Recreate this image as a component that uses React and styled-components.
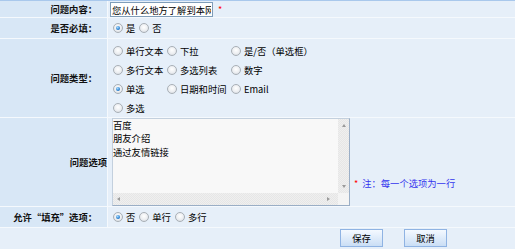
import React from 'react';
import styled, { createGlobalStyle, css } from 'styled-components';

const GlobalStyle = createGlobalStyle`
  html, body {
    margin: 0;
    padding: 0;
    background: #e6eff9;
  }
  body {
    font-family: "Noto Sans CJK SC", "Noto Sans", sans-serif;
    font-size: 9.3px;
    color: #000;
  }
`;

const Form = styled.div`
  width: 515px;
  height: 249px;
  box-sizing: border-box;
  border-top: 1px solid #a9c8ec;
  background: #f5f9fd;
  display: flex;
  flex-direction: column;
  gap: 1px;
  overflow: hidden;
`;

const Row = styled.div`
  display: grid;
  grid-template-columns: 107px 1fr;
  column-gap: 1px;
  height: ${(p) => p.$h}px;
  flex: ${(p) => (p.$h ? 'none' : '1')};
`;

const Label = styled.div`
  background: #d8e7f6;
  display: flex;
  align-items: center;
  justify-content: flex-end;
  padding-right: ${(p) => (p.$flush ? '0' : '10px')};
  font-weight: bold;
  color: #111;
  white-space: nowrap;
`;

const Cell = styled.div`
  background: #e6eff9;
  display: flex;
  align-items: ${(p) => p.$align || 'center'};
  padding-left: ${(p) => p.$pad ?? 5}px;
  white-space: nowrap;
`;

const Input = styled.input`
  width: 103px;
  height: 15px;
  box-sizing: border-box;
  margin: 1px 0 0 0;
  padding: 0 1px;
  border: 1px solid #7f9db9;
  background: #fff;
  font: inherit;
  color: #000;
  align-self: flex-start;
  outline: none;
`;

const Star = styled.span`
  color: #f00;
  font-size: 9px;
  margin-left: ${(p) => p.$gap ?? 4}px;
`;

const Group = styled.div`
  display: flex;
  align-items: center;
  gap: 4px;
`;

const Option = styled.label`
  display: inline-flex;
  align-items: center;
  gap: 3px;
`;

const Radio = styled.span`
  position: relative;
  flex: none;
  width: 10px;
  height: 10px;
  box-sizing: border-box;
  border-radius: 50%;
  border: 1px solid #a9afb6;
  background: radial-gradient(circle at 50% 40%, #ffffff 0%, #eceef1 55%, #cdd3da 100%);
  ${(p) =>
    p.$checked &&
    css`
      &::after {
        content: '';
        position: absolute;
        left: 2px;
        top: 2px;
        width: 4px;
        height: 4px;
        border-radius: 50%;
        background: radial-gradient(circle at 40% 35%, #a8dcff, #1b74c9 70%, #0c4c90);
      }
    `}
`;

const TypeGrid = styled.div`
  display: grid;
  grid-template-columns: 54px 64px auto;
  grid-auto-rows: 19px;
  align-items: center;
  align-self: flex-start;
  padding-top: 2px;
`;

const AreaBox = styled.div`
  width: 238px;
  height: 88px;
  box-sizing: border-box;
  margin-left: 2px;
  border: 1px solid #9aaec6;
  border-top-color: #c3d0de;
  border-left-color: #c3d0de;
  background: #f8f8f8;
  display: grid;
  grid-template-columns: 1fr 11px;
  grid-template-rows: 1fr 12px;
`;

const TextArea = styled.textarea`
  margin: 0;
  padding: 0;
  border: none;
  background: transparent;
  resize: none;
  outline: none;
  overflow: hidden;
  font: inherit;
  line-height: 13.4px;
  color: #000;
`;

const ScrollBar = styled.div`
  background: repeating-conic-gradient(#efefef 0% 25%, #e6e6e6 0% 50%) 0 0 / 2px 2px;
  display: flex;
  flex-direction: ${(p) => (p.$vertical ? 'column' : 'row')};
  justify-content: space-between;
  align-items: center;
  padding: ${(p) => (p.$vertical ? '5px 0' : '0 8px 0 4px')};
`;

const Corner = styled.div`
  background: #f4f4f4;
`;

const arrowShapes = {
  up: css`border-width: 0 2.5px 3px 2.5px; border-color: transparent transparent #9a9a9a transparent;`,
  down: css`border-width: 3px 2.5px 0 2.5px; border-color: #9a9a9a transparent transparent transparent;`,
  left: css`border-width: 2.5px 3px 2.5px 0; border-color: transparent #9a9a9a transparent transparent;`,
  right: css`border-width: 2.5px 0 2.5px 3px; border-color: transparent transparent transparent #9a9a9a;`,
};

const Arrow = styled.span`
  width: 0;
  height: 0;
  border-style: solid;
  ${(p) => arrowShapes[p.$dir]}
`;

const Note = styled.div`
  align-self: flex-end;
  margin: 0 0 16px 4px;
  color: #3434ee;
  display: flex;
  align-items: center;
  gap: 4px;
`;

const Footer = styled.div`
  grid-column: 1 / -1;
  background: #e6eff9;
  display: flex;
  align-items: flex-start;
  gap: 21px;
  padding: 1px 0 0 340px;
`;

const Button = styled.button`
  width: 43px;
  height: 18px;
  margin: 0;
  padding: 0;
  border: 1px solid #8fb3e3;
  background: linear-gradient(#f4f9ff, #cadef5);
  font: inherit;
  color: #000;
`;

const types = [
  ['单行文本', '下拉', '是/否（单选框）'],
  ['多行文本', '多选列表', '数字'],
  ['单选', '日期和时间', 'Email'],
  ['多选'],
];

const RadioOption = ({ checked, children }) => (
  <Option>
    <Radio $checked={checked} />
    <span>{children}</span>
  </Option>
);

export default function App() {
  return (
    <>
      <GlobalStyle />
      <Form>
        <Row $h={16}>
          <Label>问题内容：</Label>
          <Cell $pad={2}>
            <Input defaultValue="您从什么地方了解到本网站？" />
            <Star $gap={5}>*</Star>
          </Cell>
        </Row>
        <Row $h={20}>
          <Label>是否必填：</Label>
          <Cell>
            <Group>
              <RadioOption checked>是</RadioOption>
              <RadioOption>否</RadioOption>
            </Group>
          </Cell>
        </Row>
        <Row $h={78}>
          <Label>问题类型：</Label>
          <Cell>
            <TypeGrid>
              {types.flat().map((t) => (
                <RadioOption key={t} checked={t === '单选'}>
                  {t}
                </RadioOption>
              ))}
            </TypeGrid>
          </Cell>
        </Row>
        <Row $h={88}>
          <Label $flush>问题选项</Label>
          <Cell $pad={2}>
            <AreaBox>
              <TextArea readOnly defaultValue={'百度\n朋友介绍\n通过友情链接'} />
              <ScrollBar $vertical>
                <Arrow $dir="up" />
                <Arrow $dir="down" />
              </ScrollBar>
              <ScrollBar>
                <Arrow $dir="left" />
                <Arrow $dir="right" />
              </ScrollBar>
              <Corner />
            </AreaBox>
            <Note>
              <Star $gap={0}>*</Star>
              <span>注：每一个选项为一行</span>
            </Note>
          </Cell>
        </Row>
        <Row $h={20}>
          <Label>允许“填充”选项：</Label>
          <Cell>
            <Group>
              <RadioOption checked>否</RadioOption>
              <RadioOption>单行</RadioOption>
              <RadioOption>多行</RadioOption>
            </Group>
          </Cell>
        </Row>
        <Row>
          <Footer>
            <Button>保存</Button>
            <Button>取消</Button>
          </Footer>
        </Row>
      </Form>
    </>
  );
}
